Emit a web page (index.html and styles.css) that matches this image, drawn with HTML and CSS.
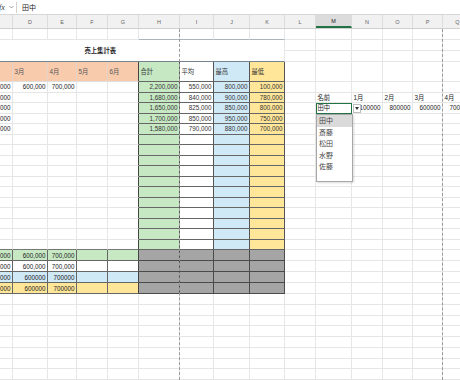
FILE: index.html
```html
<!DOCTYPE html>
<html lang="ja">
<head>
    <meta charset="UTF-8">
    <meta name="viewport" content="width=device-width, initial-scale=1.0">
    <title>売上集計表</title>
    <link rel="stylesheet" href="styles.css">
</head>
<body>
    <div class="formula-bar">
        <div class="fx-tools">
            <span class="fx">fx</span>
            <svg class="chev" width="5" height="4" viewBox="0 0 5 4"><path d="M0.5 1 L2.5 3 L4.5 1" fill="none" stroke="#777" stroke-width="0.7"/></svg>
        </div>
        <div class="formula-input">田中</div>
    </div>
    <div class="col-headers">
        <div></div>
        <div>D</div>
        <div>E</div>
        <div>F</div>
        <div>G</div>
        <div>H</div>
        <div>I</div>
        <div>J</div>
        <div>K</div>
        <div>L</div>
        <div class="active">M</div>
        <div>N</div>
        <div>O</div>
        <div>P</div>
        <div>Q</div>
    </div>
    <div class="sheet" id="sheet"></div>

    <div class="page-break pb-first"></div>
    <div class="page-break pb-second"></div>

    <div class="drop-button">
        <svg width="4" height="3" viewBox="0 0 4 3"><path d="M0 0 L4 0 L2 3 Z" fill="#333"/></svg>
    </div>
    <ul class="dropdown">
        <li class="hover">田中</li>
        <li>斎藤</li>
        <li>松田</li>
        <li>水野</li>
        <li>佐藤</li>
    </ul>

    <script>
        const sheet = document.getElementById('sheet');
        const fills = ['green', 'white', 'blue', 'yellow'];
        const months = ['', '3月', '4月', '5月', '6月'];
        const heads = ['合計', '平均', '最高', '最低'];
        const totals = [
            ['2,200,000', '550,000', '800,000', '100,000'],
            ['1,680,000', '840,000', '900,000', '780,000'],
            ['1,650,000', '825,000', '850,000', '800,000'],
            ['1,700,000', '850,000', '950,000', '750,000'],
            ['1,580,000', '790,000', '880,000', '700,000']
        ];
        const lower = [
            ['500,000', '600,000', '700,000'],
            ['500,000', '600,000', '700,000'],
            ['500000', '600000', '700000'],
            ['500000', '600000', '700000']
        ];
        const listHead = ['名前', '1月', '2月', '3月', '4月'];
        const listRow = ['田中', '100000', '800000', '600000', '700000'];

        function addCell(text, cls) {
            const div = document.createElement('div');
            div.className = 'cell ' + cls;
            div.textContent = text;
            sheet.appendChild(div);
        }

        for (let r = 0; r < 32; r++) {
            for (let c = 0; c < 15; c++) {
                // title is merged over C:K on two rows
                if ((r === 1 || r === 2) && c < 9) {
                    if (r === 1 && c === 0) addCell('売上集計表', 'title');
                    continue;
                }
                let text = '';
                const cls = [];

                if (c >= 5 && c <= 8 && r >= 3 && r <= 19) {
                    cls.push('box', fills[c - 5]);
                    if (r === 3) {
                        text = heads[c - 5];
                    } else if (r <= 8) {
                        text = totals[r - 4][c - 5];
                        cls.push('num');
                    }
                } else if (c >= 5 && c <= 8 && r >= 20 && r <= 23) {
                    cls.push('grey');
                } else if (c < 5 && r === 3) {
                    cls.push('orange');
                    text = months[c];
                } else if (c < 5 && r >= 4 && r <= 8) {
                    if (c === 0) text = '500,000';
                    if (r === 4 && c === 1) text = '600,000';
                    if (r === 4 && c === 2) text = '700,000';
                    cls.push('num');
                } else if (c < 5 && r >= 20 && r <= 23) {
                    cls.push('edge', fills[r - 20]);
                    if (c < 3) {
                        text = lower[r - 20][c];
                        cls.push('num');
                    }
                } else if (r === 5 && c >= 10) {
                    text = listHead[c - 10];
                } else if (r === 6 && c >= 10) {
                    text = listRow[c - 10];
                    cls.push(c === 10 ? 'selected' : 'num');
                }

                if (r === 0 && c >= 5 && c <= 8) cls.push('top-line');
                if (r === 19 && c < 5) cls.push('above-edge');
                if (c === 4 && r >= 3 && r <= 23) cls.push('split');

                addCell(text, cls.join(' '));
            }
        }
    </script>
</body>
</html>
```

FILE: styles.css
```css
* {
    margin: 0;
    padding: 0;
    box-sizing: border-box;
}
body {
    width: 460px;
    height: 380px;
    overflow: hidden;
    position: relative;
    background: #fff;
    color: #222;
    font-family: "Liberation Sans", "Noto Sans CJK JP", sans-serif;
}
.formula-bar {
    height: 15px;
    display: flex;
    align-items: center;
    border-bottom: 1px solid #d6d6d6;
}
.fx-tools {
    width: 18px;
    height: 11px;
    display: flex;
    align-items: center;
    gap: 4px;
    margin-left: -1px;
    border-right: 1px solid #d0d0d0;
}
.fx {
    font-family: "Liberation Serif", serif;
    font-style: italic;
    font-size: 8px;
    color: #333;
}
.formula-input {
    padding-left: 5px;
    font-size: 7px;
    color: #222;
}
.col-headers,
.sheet {
    display: grid;
    grid-template-columns: 13px 35px 29px 31px 31px 41px 34px 36px 35px 31px 36px 31px 30px 30px 30px;
    width: 473px;
}
.col-headers {
    height: 14px;
    background: #f1f1f1;
    border-bottom: 1px solid #cfcfcf;
}
.col-headers div {
    display: flex;
    align-items: center;
    justify-content: center;
    font-size: 5.5px;
    color: #666;
    border-right: 1px solid #dddddd;
}
.col-headers .active {
    background: #dcdcdc;
    color: #222;
    border-bottom: 2px solid #217346;
}
.sheet {
    grid-template-rows: 11px 11px 11px 20px repeat(16, 10.5px) repeat(4, 11px) repeat(8, 10.75px);
}
.cell {
    display: flex;
    align-items: center;
    padding: 0 1.5px;
    overflow: hidden;
    white-space: nowrap;
    font-size: 6.3px;
    border-right: 1px solid #e6e6e6;
    border-bottom: 1px solid #e6e6e6;
}
.num {
    justify-content: flex-end;
}
.title {
    grid-column: span 9;
    grid-row: span 2;
    justify-content: center;
    padding-right: 85px;
    font-weight: bold;
    border-bottom: 1px solid #74838e;
}
.top-line {
    border-bottom-color: #a9b4bc;
}
.orange {
    background: #f8cbad;
    border-right-color: #e4d3c8;
    border-bottom-color: #dedede;
    color: #555;
}
.box {
    border-right: 1px solid #555;
    border-bottom: 1px solid #666;
    color: #333;
}
.green { background: #c6e9c4; }
.white { background: #fff; }
.blue { background: #cfe9f7; }
.yellow { background: #ffe699; }
.grey {
    background: #a5a5a5;
    border-right: 1px solid #4a4a4a;
    border-bottom: 1.5px solid #4a4a4a;
}
.edge {
    border-right: 1px solid #666;
    border-bottom: 1px solid #666;
}
.above-edge {
    border-bottom: 1px solid #777;
}
.split {
    border-right: 1px solid #444;
}
.selected {
    outline: 1.5px solid #217346;
    outline-offset: -1px;
}
.page-break {
    position: absolute;
    top: 29px;
    bottom: 0;
    width: 0;
    border-left: 1px dashed #9a9a9a;
}
.pb-first { left: 179px; }
.pb-second { left: 442px; }
.drop-button {
    position: absolute;
    left: 353px;
    top: 104px;
    width: 8px;
    height: 9px;
    display: flex;
    align-items: center;
    justify-content: center;
    background: #fff;
    border: 1px solid #bdbdbd;
}
.dropdown {
    position: absolute;
    left: 316px;
    top: 114px;
    width: 37px;
    height: 68px;
    list-style: none;
    background: #fff;
    border: 1px solid #a8a8a8;
    box-shadow: 1px 1px 2px rgba(0, 0, 0, 0.15);
}
.dropdown li {
    height: 11.5px;
    line-height: 11.5px;
    padding-left: 2px;
    font-size: 7px;
    color: #444;
}
.dropdown .hover {
    background: #dadada;
}
```
